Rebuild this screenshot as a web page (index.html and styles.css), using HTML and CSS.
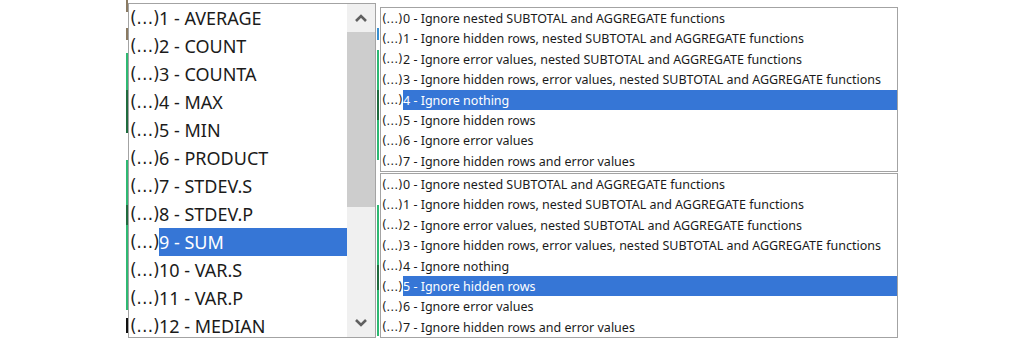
FILE: index.html
```html
<!DOCTYPE html>
<html lang="en">
<head>
<meta charset="utf-8">
<title>Function lists</title>
<link rel="stylesheet" href="styles.css">
</head>
<body>
<div class="stage">
  <div class="edge edge-left"></div>
  <div class="listbox big">
    <ul class="items">
      <li class="item"><span class="fx">(…)</span><span class="label">1 - AVERAGE</span></li>
      <li class="item"><span class="fx">(…)</span><span class="label">2 - COUNT</span></li>
      <li class="item"><span class="fx">(…)</span><span class="label">3 - COUNTA</span></li>
      <li class="item"><span class="fx">(…)</span><span class="label">4 - MAX</span></li>
      <li class="item"><span class="fx">(…)</span><span class="label">5 - MIN</span></li>
      <li class="item"><span class="fx">(…)</span><span class="label">6 - PRODUCT</span></li>
      <li class="item"><span class="fx">(…)</span><span class="label">7 - STDEV.S</span></li>
      <li class="item"><span class="fx">(…)</span><span class="label">8 - STDEV.P</span></li>
      <li class="item selected"><span class="fx">(…)</span><span class="label">9 - SUM</span></li>
      <li class="item"><span class="fx">(…)</span><span class="label">10 - VAR.S</span></li>
      <li class="item"><span class="fx">(…)</span><span class="label">11 - VAR.P</span></li>
      <li class="item"><span class="fx">(…)</span><span class="label">12 - MEDIAN</span></li>
    </ul>
    <div class="scrollbar">
      <div class="arrow">
        <svg width="14" height="10" viewBox="0 0 14 10"><polyline points="2,8 7,3 12,8" fill="none" stroke="#606060" stroke-width="2.6"/></svg>
      </div>
      <div class="thumb"></div>
      <div class="track"></div>
      <div class="arrow">
        <svg width="14" height="10" viewBox="0 0 14 10"><polyline points="2,2 7,7 12,2" fill="none" stroke="#606060" stroke-width="2.6"/></svg>
      </div>
    </div>
  </div>
  <div class="edge edge-mid"></div>
  <div class="stack">
    <ul class="listbox small">
      <li class="item"><span class="fx">(…)</span><span class="label">0 - Ignore nested SUBTOTAL and AGGREGATE functions</span></li>
      <li class="item"><span class="fx">(…)</span><span class="label">1 - Ignore hidden rows, nested SUBTOTAL and AGGREGATE functions</span></li>
      <li class="item"><span class="fx">(…)</span><span class="label">2 - Ignore error values, nested SUBTOTAL and AGGREGATE functions</span></li>
      <li class="item"><span class="fx">(…)</span><span class="label">3 - Ignore hidden rows, error values, nested SUBTOTAL and AGGREGATE functions</span></li>
      <li class="item selected"><span class="fx">(…)</span><span class="label">4 - Ignore nothing</span></li>
      <li class="item"><span class="fx">(…)</span><span class="label">5 - Ignore hidden rows</span></li>
      <li class="item"><span class="fx">(…)</span><span class="label">6 - Ignore error values</span></li>
      <li class="item"><span class="fx">(…)</span><span class="label">7 - Ignore hidden rows and error values</span></li>
    </ul>
    <ul class="listbox small">
      <li class="item"><span class="fx">(…)</span><span class="label">0 - Ignore nested SUBTOTAL and AGGREGATE functions</span></li>
      <li class="item"><span class="fx">(…)</span><span class="label">1 - Ignore hidden rows, nested SUBTOTAL and AGGREGATE functions</span></li>
      <li class="item"><span class="fx">(…)</span><span class="label">2 - Ignore error values, nested SUBTOTAL and AGGREGATE functions</span></li>
      <li class="item"><span class="fx">(…)</span><span class="label">3 - Ignore hidden rows, error values, nested SUBTOTAL and AGGREGATE functions</span></li>
      <li class="item"><span class="fx">(…)</span><span class="label">4 - Ignore nothing</span></li>
      <li class="item selected"><span class="fx">(…)</span><span class="label">5 - Ignore hidden rows</span></li>
      <li class="item"><span class="fx">(…)</span><span class="label">6 - Ignore error values</span></li>
      <li class="item"><span class="fx">(…)</span><span class="label">7 - Ignore hidden rows and error values</span></li>
    </ul>
  </div>
</div>
</body>
</html>
```

FILE: styles.css
```css
* { box-sizing: border-box; }
html, body { margin: 0; padding: 0; background: #ffffff; }
body {
  width: 1024px;
  height: 343px;
  overflow: hidden;
  font-family: "Noto Sans", "Open Sans", sans-serif;
  color: #1b1b1b;
}
ul { list-style: none; margin: 0; padding: 0; }

.stage {
  display: flex;
  align-items: flex-start;
  padding-left: 126px;
}

.edge {
  width: 2px;
  height: 343px;
  flex: none;
}
.edge-left {
  background: linear-gradient(to bottom,
    #8a7a62 0, #8a7a62 12px, transparent 12px, transparent 28px,
    #8a7a62 28px, #8a7a62 40px, transparent 40px, transparent 53px,
    #2eb872 53px, #2eb872 90px, #1f6b3e 90px, #1f6b3e 133px, transparent 133px, transparent 160px,
    #2eb872 160px, #2eb872 205px, #1f6b3e 205px, #1f6b3e 225px, #2eb872 225px, #2eb872 310px,
    transparent 310px, transparent 318px, #111 318px, #111 333px, transparent 333px);
}
.edge-mid {
  width: 4px;
  background:
    linear-gradient(to bottom,
      transparent 0, transparent 28px, #3a8fd0 28px, #3a8fd0 40px, transparent 40px, transparent 50px,
      #2eb872 50px, #2eb872 90px, #1f6b3e 90px, #1f6b3e 120px, #2eb872 120px, #2eb872 160px,
      transparent 160px, transparent 205px, #2eb872 205px, #2eb872 265px, #1f6b3e 265px, #1f6b3e 290px,
      #2eb872 290px, #2eb872 336px, transparent 336px) no-repeat 1px 0 / 2px 100%;
}

.listbox {
  background: #ffffff;
  border: 1px solid #a3a3a3;
  overflow: hidden;
  flex: none;
}

.fx {
  font-family: "DejaVu Sans", sans-serif;
  color: #222222;
  flex: none;
  white-space: nowrap;
}

/* big list */
.big {
  display: flex;
  width: 248px;
  height: 335px;
  margin-top: 3px;
}
.big .items {
  flex: 1;
  min-width: 0;
}
.big .item {
  display: flex;
  align-items: center;
  height: 28px;
  font-size: 18px;
  white-space: nowrap;
}
.big .fx {
  width: 30px;
  padding-left: 1px;
  font-size: 17px;
  letter-spacing: -0.3px;
}
.big .label {
  flex: 1;
  height: 28px;
  line-height: 28px;
}

.item.selected .label {
  background: #3676d6;
  color: #ffffff;
}

.scrollbar {
  width: 28px;
  flex: none;
  display: flex;
  flex-direction: column;
  background: #f0f0f0;
}
.arrow {
  height: 28px;
  display: flex;
  align-items: center;
  justify-content: center;
  flex: none;
}
.thumb {
  height: 175px;
  background: #cdcdcd;
  flex: none;
}
.track { flex: 1; }

/* small lists */
.stack {
  width: 518px;
  margin-top: 7px;
  display: flex;
  flex-direction: column;
  gap: 1px;
  flex: none;
}
.small {
  height: 165px;
}
.small .item {
  display: flex;
  align-items: center;
  height: 20.4px;
  font-size: 12.5px;
  white-space: nowrap;
}
.small .fx {
  width: 22px;
  padding-left: 1px;
  padding-top: 1px;
  font-size: 12px;
  letter-spacing: -0.4px;
}
.small .label {
  flex: 1;
  height: 20.4px;
  padding-top: 1px;
  line-height: 20.4px;
}
```
